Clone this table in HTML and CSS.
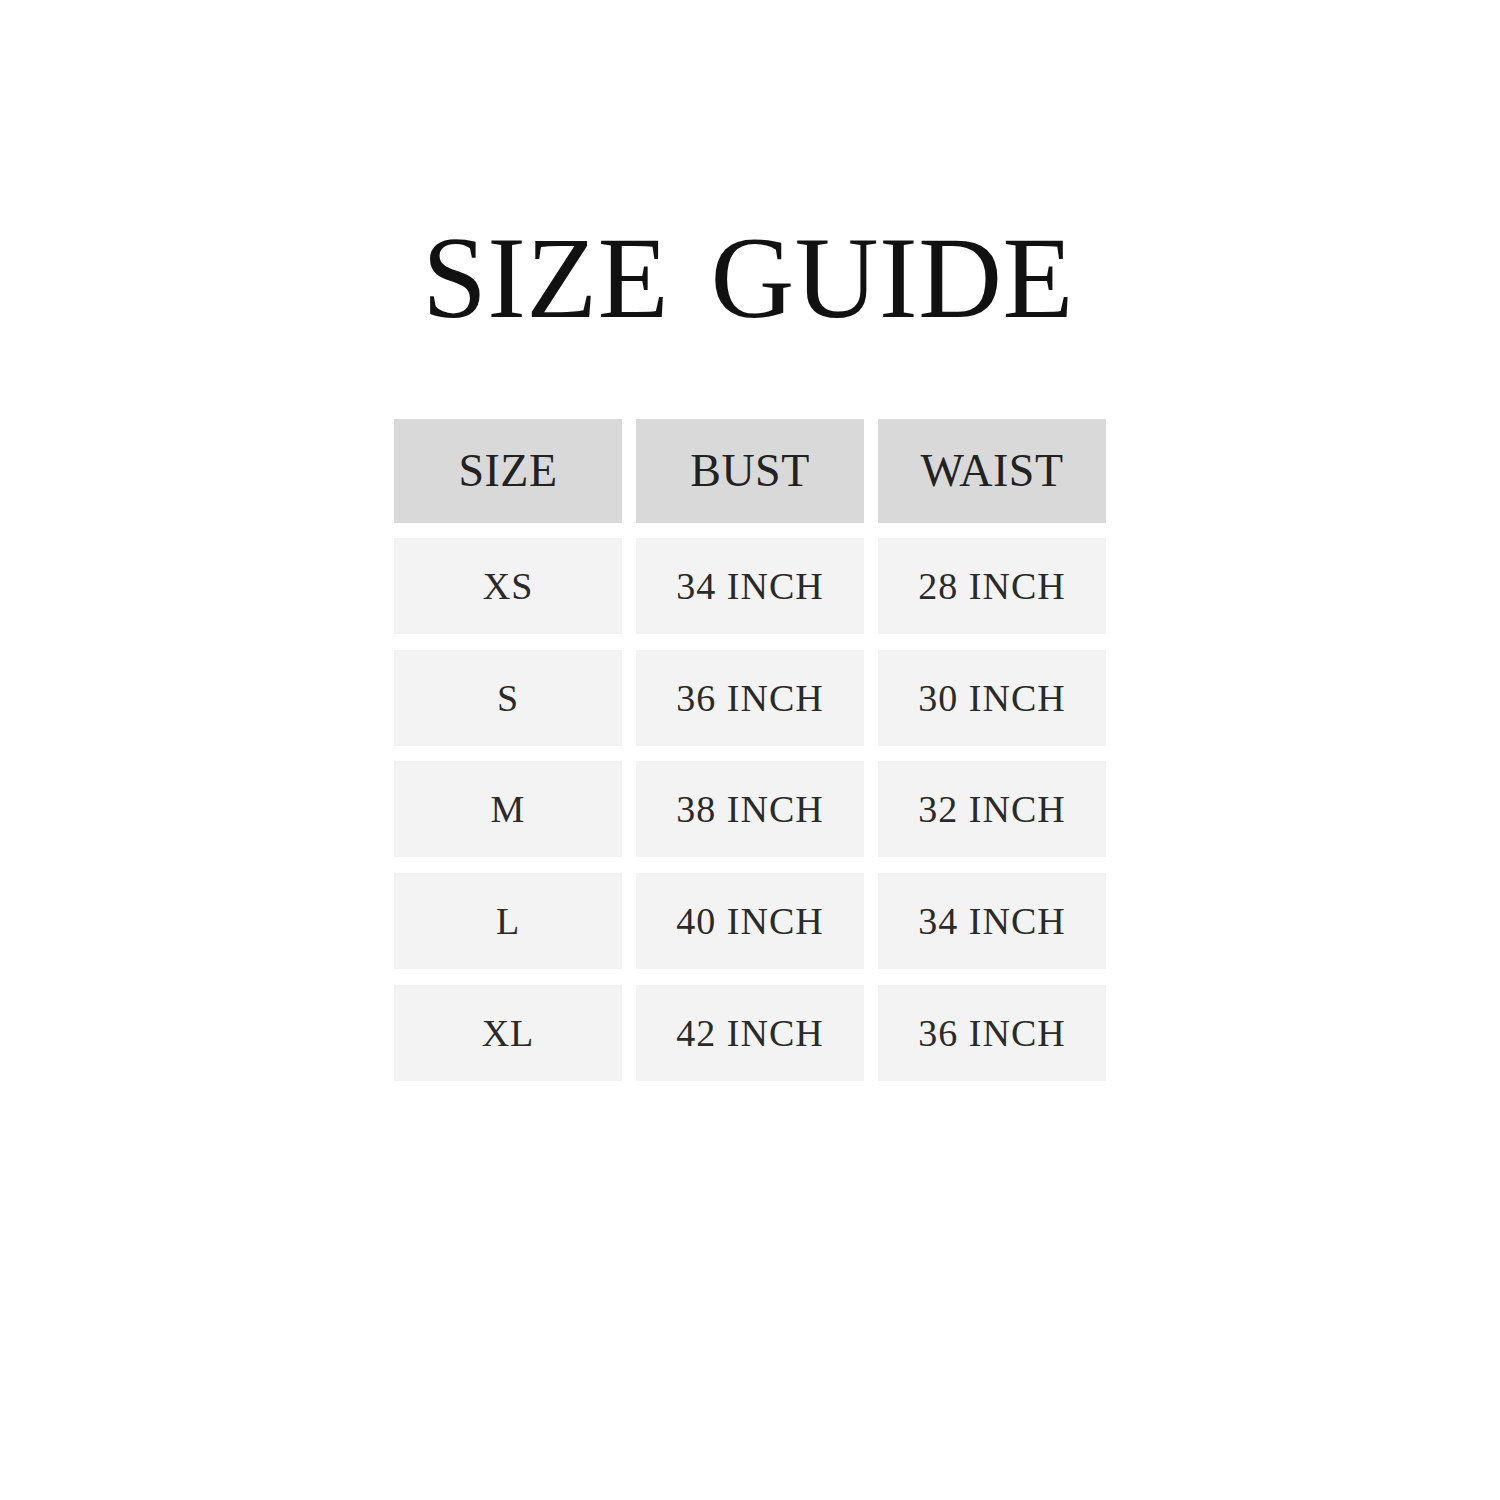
FILE: index.html
```html
<!DOCTYPE html>
<html lang="en">
<head>
<meta charset="utf-8">
<title>Size Guide</title>
<link rel="stylesheet" href="styles.css">
</head>
<body>
<main class="page">
  <h1 class="title">SIZE GUIDE</h1>
  <div class="chart">
    <div class="cell head">SIZE</div>
    <div class="cell head">BUST</div>
    <div class="cell head">WAIST</div>

    <div class="cell">XS</div>
    <div class="cell">34 INCH</div>
    <div class="cell">28 INCH</div>

    <div class="cell">S</div>
    <div class="cell">36 INCH</div>
    <div class="cell">30 INCH</div>

    <div class="cell">M</div>
    <div class="cell">38 INCH</div>
    <div class="cell">32 INCH</div>

    <div class="cell">L</div>
    <div class="cell">40 INCH</div>
    <div class="cell">34 INCH</div>

    <div class="cell">XL</div>
    <div class="cell">42 INCH</div>
    <div class="cell">36 INCH</div>
  </div>
</main>
</body>
</html>
```

FILE: styles.css
```css
html, body {
  margin: 0;
  padding: 0;
  background: #ffffff;
}

.page {
  width: 1500px;
  height: 1500px;
  display: flex;
  flex-direction: column;
  align-items: center;
  padding-top: 220px;
  box-sizing: border-box;
  font-family: "Liberation Serif", "DejaVu Serif", serif;
}

.title {
  margin: 0 4px 0 0;
  font-size: 116px;
  font-weight: normal;
  line-height: 1;
  color: #111111;
  letter-spacing: 0.5px;
  word-spacing: 12px;
}

.chart {
  margin-top: 83px;
  display: grid;
  grid-template-columns: repeat(3, 228px);
  grid-template-rows: 103px repeat(5, 96px);
  column-gap: 14px;
  row-gap: 15.75px;
}

.chart .head {
  margin-bottom: -1px;
}

.cell {
  display: flex;
  align-items: center;
  justify-content: center;
  background: #f3f3f3;
  color: #2a2a2a;
  font-size: 38px;
  line-height: 1;
  letter-spacing: 1px;
}

.cell.head {
  background: #d9d9d9;
  font-size: 46px;
  color: #222222;
  letter-spacing: 0.5px;
}
```
